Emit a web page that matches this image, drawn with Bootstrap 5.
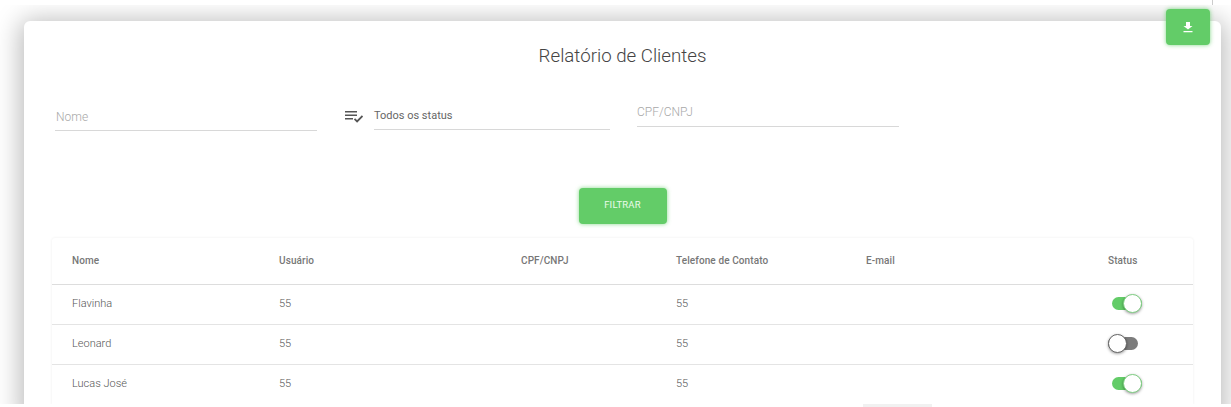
<!doctype html>
<html lang="pt-BR">
<head>
<meta charset="utf-8">
<title>Relatório de Clientes</title>
<link href="https://cdn.jsdelivr.net/npm/bootstrap@5.3.0/dist/css/bootstrap.min.css" rel="stylesheet">
<style>
html,body{height:407px;overflow:hidden;background:#fff;font-family:Roboto,"Liberation Sans",sans-serif;}
.stage{position:relative;height:407px;padding-top:5px;}
.frame{height:399px;overflow:hidden;padding:16px 10px 0 24px;background:#fff;}
.sheet{height:400px;background:#fff;border-radius:6px;box-shadow:0 3px 26px 4px rgba(0,0,0,.27);padding:0 28px;}
.sheet-title{font-size:18.7px;font-weight:300;line-height:24px;padding-top:23px;margin:0;text-align:center;color:#444;}
.filters{height:121px;position:relative;}
.field{border:0;border-radius:0;border-bottom:1px solid #d8d8d8;background:transparent;font-size:12px;font-weight:300;color:#555;padding:1px 0 6px 1px;height:auto;line-height:14px;box-shadow:none;}
.field::placeholder{color:#a8a8a8;opacity:1;}
.f-name{width:262px;margin-left:3px;margin-top:41px;}
.f-icon{width:18px;margin-left:28px;margin-top:41px;flex:none;}
.f-status{width:236px;margin-left:11px;margin-top:41px;color:#666;font-weight:400;font-size:11px;padding:0 0 6px 0;}
.f-doc{width:262px;margin-left:27px;margin-top:37px;padding:0 0 7px 0;}
.btn-go{background:#63cc68;color:#eafbea;border:0;border-radius:4px;font-size:9.5px;font-weight:400;letter-spacing:.2px;width:88px;height:36px;padding:0 0 2px;box-shadow:0 0 4px rgba(99,204,104,.75);}
.btn-go:hover{background:#63cc68;color:#fff;}
.go-row{margin-top:-1px;height:50px;}
.panel{background:#fff;border-radius:3px 3px 0 0;box-shadow:0 0 3px rgba(0,0,0,.07);}
.grid-t{table-layout:fixed;width:100%;margin:0;font-size:11px;color:#555;}
.grid-t th{font-weight:500;color:#777;font-size:10px;height:46px;vertical-align:middle;border-bottom:1px solid #ddd;padding:0 0 0 20px;letter-spacing:.1px;}
.grid-t td{font-weight:300;height:40px;vertical-align:middle;border-bottom:1px solid #e4e4e4;padding:0 0 0 20px;color:#555;}
.c1{width:207px}.c2{width:242px}.c3{width:155px}.c4{width:190px}.c5{width:242px}
.grid-t td.sw-cell{padding-left:0;}
.grid-t th.sw-head{padding-left:20px;}
.sw{display:block;position:relative;width:30px;height:13px;border-radius:7px;margin:-2px 0 0 24px;}
.sw.on{background:#63cc68;}
.sw.off{background:#7c7c7c;margin-left:20px;}
.sw::after{content:"";position:absolute;top:-3px;width:19px;height:19px;border-radius:50%;background:#fff;box-shadow:0 1px 3px rgba(0,0,0,.4);}
.sw.on::after{right:0;border:1px solid #7fd083;}
.sw.off::after{left:0;border:1px solid #666;}
.dl{position:absolute;left:1166px;top:9px;width:44px;height:36px;background:#63cc68;border:0;border-radius:4px;box-shadow:0 0 4px rgba(99,204,104,.8);}
.dl:hover{background:#63cc68;}
.tick{position:absolute;left:1212px;top:0;width:1px;height:5px;background:#ccc;}
.tab-stub{position:absolute;left:863px;top:404px;width:69px;height:3px;background:#f1f1f1;}
</style>
</head>
<body>
<div class="stage">
  <div class="frame">
    <div class="sheet">
      <h4 class="sheet-title">Relatório de Clientes</h4>
      <div class="filters d-flex align-items-start">
        <input class="field f-name form-control" placeholder="Nome" aria-label="Nome">
        <svg class="f-icon" width="18" height="14" viewBox="0 0 18 14" aria-hidden="true"><path d="M0 2h12v1.500H0zM0 5.500h12V7H0zM0 9h8v1.500H0z" fill="#555"/><path d="M9.500 9.800l2.600 2.600L17.500 7" fill="none" stroke="#555" stroke-width="1.800"/></svg>
        <div class="field f-status">Todos os status</div>
        <input class="field f-doc form-control" placeholder="CPF/CNPJ" aria-label="CPF/CNPJ">
      </div>
      <div class="go-row d-flex justify-content-center align-items-start"><button class="btn btn-go" type="button">FILTRAR</button></div>
      <div class="panel">
        <table class="table grid-t">
          <thead><tr><th class="c1">Nome</th><th class="c2">Usuário</th><th class="c3">CPF/CNPJ</th><th class="c4">Telefone de Contato</th><th class="c5">E-mail</th><th class="sw-head">Status</th></tr></thead>
          <tbody>
            <tr><td>Flavinha</td><td>55</td><td></td><td>55</td><td></td><td class="sw-cell"><span class="sw on"></span></td></tr>
            <tr><td>Leonard</td><td>55</td><td></td><td>55</td><td></td><td class="sw-cell"><span class="sw off"></span></td></tr>
            <tr><td>Lucas José</td><td>55</td><td></td><td>55</td><td></td><td class="sw-cell"><span class="sw on"></span></td></tr>
          </tbody>
        </table>
      </div>
    </div>
  </div>
  <button class="dl btn p-0 d-flex align-items-center justify-content-center" type="button" aria-label="Baixar">
    <svg width="12" height="12" viewBox="0 0 12 12" aria-hidden="true"><path d="M4 1h4v4h2.500L6 8.500 1.500 5H4zM1.500 10h9v1.200h-9z" fill="#fff"/></svg>
  </button>
  <div class="tick"></div>
  <div class="tab-stub"></div>
</div>
<script src="https://cdn.jsdelivr.net/npm/bootstrap@5.3.0/dist/js/bootstrap.bundle.min.js"></script>
</body>
</html>
